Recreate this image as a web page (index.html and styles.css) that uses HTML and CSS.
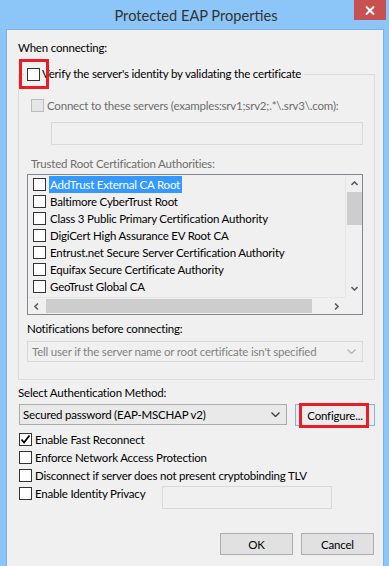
FILE: index.html
```html
<!DOCTYPE html>
<html lang="en">
<head>
  <meta charset="UTF-8">
  <title>Protected EAP Properties</title>
  <link rel="stylesheet" href="styles.css">
</head>
<body>

  <div class="window">
    <div class="titlebar">
      <span class="title">Protected EAP Properties</span>
      <span class="close">
        <svg width="10" height="9" viewBox="0 0 10 9"><path d="M1 0.5 L9 8.5 M9 0.5 L1 8.5" stroke="#fff" stroke-width="2"/></svg>
      </span>
    </div>

    <div class="panel">
      <div class="label">When connecting:</div>

      <fieldset class="group">
        <legend class="legend">
          <span class="cb"></span>
          <span>Verify the server's identity by validating the certificate</span>
          <span class="mark mark-cb"></span>
        </legend>

        <div class="check indent disabled">
          <span class="cb"></span>
          <span>Connect to these servers (examples:srv1;srv2;.*\.srv3\.com):</span>
        </div>
        <div class="field server-field"></div>

        <div class="label disabled trusted">Trusted Root Certification Authorities:</div>
        <div class="list">
          <div class="items">
            <div class="item selected"><span class="cb"></span><span class="text">AddTrust External CA Root</span></div>
            <div class="item"><span class="cb"></span><span class="text">Baltimore CyberTrust Root</span></div>
            <div class="item"><span class="cb"></span><span class="text">Class 3 Public Primary Certification Authority</span></div>
            <div class="item"><span class="cb"></span><span class="text">DigiCert High Assurance EV Root CA</span></div>
            <div class="item"><span class="cb"></span><span class="text">Entrust.net Secure Server Certification Authority</span></div>
            <div class="item"><span class="cb"></span><span class="text">Equifax Secure Certificate Authority</span></div>
            <div class="item"><span class="cb"></span><span class="text">GeoTrust Global CA</span></div>
          </div>
          <div class="vscroll">
            <span class="arrow"><svg width="7" height="5" viewBox="0 0 7 5"><path d="M0.5 4 L3.5 1 L6.5 4" fill="none" stroke="#606060" stroke-width="1.6"/></svg></span>
            <span class="vthumb"></span>
            <span class="spacer"></span>
            <span class="arrow"><svg width="7" height="5" viewBox="0 0 7 5"><path d="M0.5 1 L3.5 4 L6.5 1" fill="none" stroke="#606060" stroke-width="1.6"/></svg></span>
          </div>
          <div class="hscroll">
            <span class="arrow"><svg width="5" height="7" viewBox="0 0 5 7"><path d="M4 0.5 L1 3.5 L4 6.5" fill="none" stroke="#606060" stroke-width="1.6"/></svg></span>
            <span class="hthumb"></span>
            <span class="arrow"><svg width="5" height="7" viewBox="0 0 5 7"><path d="M1 0.5 L4 3.5 L1 6.5" fill="none" stroke="#606060" stroke-width="1.6"/></svg></span>
          </div>
          <div class="corner"></div>
        </div>

        <div class="label notify">Notifications before connecting:</div>
        <div class="combo combo-disabled">
          <span>Tell user if the server name or root certificate isn't specified</span>
          <svg width="9" height="5" viewBox="0 0 9 5"><path d="M0.5 0.5 L4.5 4.5 L8.5 0.5" fill="none" stroke="#b5b5b5" stroke-width="1.4"/></svg>
        </div>
      </fieldset>

      <div class="label method-label">Select Authentication Method:</div>
      <div class="method-row">
        <div class="combo method">
          <span>Secured password (EAP-MSCHAP v2)</span>
          <svg width="9" height="5" viewBox="0 0 9 5"><path d="M0.5 0.5 L4.5 4.5 L8.5 0.5" fill="none" stroke="#404040" stroke-width="1.4"/></svg>
        </div>
        <button class="btn btn-default">Configure...<span class="mark mark-btn"></span></button>
      </div>

      <div class="options">
        <div class="check opt">
          <span class="cb"><svg width="11" height="11" viewBox="0 0 11 11"><path d="M1.5 5.5 L4 8.5 L9.5 1.5" fill="none" stroke="#000" stroke-width="1.8"/></svg></span>
          <span>Enable Fast Reconnect</span>
        </div>
        <div class="check opt"><span class="cb"></span><span>Enforce Network Access Protection</span></div>
        <div class="check opt"><span class="cb"></span><span>Disconnect if server does not present cryptobinding TLV</span></div>
        <div class="privacy">
          <div class="check opt privacy-check"><span class="cb"></span><span>Enable Identity Privacy</span></div>
          <div class="field privacy-field"></div>
        </div>
      </div>

      <div class="actions">
        <button class="btn">OK</button>
        <button class="btn">Cancel</button>
      </div>
    </div>
  </div>

</body>
</html>
```

FILE: styles.css
```css
* {
  box-sizing: border-box;
}
body {
  margin: 0;
  background: #8cc5f7;
  font-family: Lato, "Noto Sans", Arial, sans-serif;
  font-size: 11.5px;
  letter-spacing: -0.2px;
  color: #000;
}
.window {
  height: 566px;
  display: flex;
  flex-direction: column;
  overflow: hidden;
}
.titlebar {
  height: 29px;
  position: relative;
  display: flex;
  justify-content: center;
  align-items: center;
}
.title {
  font-size: 14.6px;
  letter-spacing: 0;
  color: #333;
  margin: 1px 0 0 3px;
}
.close {
  position: absolute;
  top: 0;
  right: 3px;
  width: 32px;
  height: 20px;
  background: #c75050;
  display: flex;
  align-items: center;
  justify-content: center;
}
.panel {
  flex: 1;
  margin: 0 5px 0 6px;
  background: #f0f0f0;
  border: 1px solid #7eb0e2;
  border-bottom: none;
  padding: 10px 8px 0 11px;
}
.label {
  line-height: 16px;
  white-space: nowrap;
}
.disabled {
  color: #6d6d6d;
}

/* checkboxes */
.cb {
  width: 13px;
  height: 13px;
  flex: none;
  border: 1px solid #333;
  background: #fff;
  display: flex;
  align-items: center;
  justify-content: center;
}
.disabled .cb {
  border-color: #bcbcbc;
  background: #e6e6e6;
}
.check {
  display: flex;
  align-items: center;
  gap: 3px;
  white-space: nowrap;
}
.mark {
  position: absolute;
  border: 3px solid #e81d25;
}

/* group box */
.group {
  margin: 10px 0 0;
  border: 1px solid #dcdcdc;
  padding: 0 11px 17px 8px;
  min-width: 0;
}
.legend {
  position: relative;
  display: flex;
  align-items: center;
  gap: 2px;
  line-height: 16px;
  margin-left: -3px;
  padding: 0 3px;
  white-space: nowrap;
}
.mark-cb {
  left: -5px;
  top: -7px;
  width: 30px;
  height: 30px;
}
.indent {
  margin: 15px 0 0 4px;
  height: 16px;
}
.field {
  height: 23px;
  border: 1px solid #d9d9d9;
  background: #f0f0f0;
}
.server-field {
  margin: 9px 0 0 24px;
}
.trusted {
  margin: 11px 0 0 4px;
}

/* certificate list */
.list {
  margin-top: 2px;
  height: 141px;
  border: 1px solid #828790;
  background: #f0f0f0;
  display: grid;
  grid-template-columns: 1fr 17px;
  grid-template-rows: 1fr 17px;
}
.items {
  padding: 1px 0 0 5px;
  overflow: hidden;
}
.item {
  height: 17px;
  display: flex;
  align-items: center;
  gap: 3px;
  white-space: nowrap;
}
.item .text {
  line-height: 17px;
  padding: 0 2px 0 1px;
}
.item.selected .text {
  background: #3399ff;
  color: #fff;
}
.arrow {
  width: 17px;
  height: 17px;
  flex: none;
  display: flex;
  align-items: center;
  justify-content: center;
}
.vscroll {
  display: flex;
  flex-direction: column;
  align-items: center;
  border-left: 1px solid #e6e6e6;
}
.vthumb {
  width: 15px;
  height: 33px;
  background: #cdcdcd;
}
.spacer {
  flex: 1;
}
.hscroll {
  display: flex;
  align-items: center;
  border-top: 1px solid #e6e6e6;
}
.hthumb {
  width: 266px;
  height: 14px;
  margin-left: 1px;
  background: #cdcdcd;
}
.hscroll .arrow:last-child {
  margin-left: auto;
}
.notify {
  margin-top: 6px;
}

/* combo boxes */
.combo {
  height: 21px;
  display: flex;
  align-items: center;
  justify-content: space-between;
  white-space: nowrap;
}
.combo-disabled {
  margin-top: 4px;
  border: 1px solid #d9d9d9;
  padding: 0 6px 0 4px;
  color: #838383;
}
.method-label {
  margin-top: 5px;
}
.method-row {
  margin-top: 3px;
  display: flex;
  align-items: flex-start;
  gap: 8px;
}
.method {
  width: 268px;
  margin-left: 1px;
  border: 1px solid #acacac;
  background: #e9e9e9;
  padding: 0 6px 0 3px;
}

/* buttons */
.btn {
  position: relative;
  height: 22px;
  width: 73px;
  font-family: inherit;
  font-size: 11.5px;
  letter-spacing: -0.2px;
  color: #000;
  background: #e1e1e1;
  border: 1px solid #adadad;
  border-radius: 0;
  padding: 0;
}
.btn-default {
  width: 80px;
  border-color: #7eb4ea;
  background: #ececec;
}
.mark-btn {
  left: 3px;
  right: 5px;
  top: -2px;
  bottom: -3px;
}

/* options */
.options {
  margin-top: 4px;
}
.opt {
  height: 18px;
  margin-left: 1px;
}
.privacy {
  display: flex;
  align-items: flex-start;
}
.privacy-check {
  width: 143px;
}
.privacy-field {
  width: 170px;
  margin-top: 2px;
}
.actions {
  margin: 24px 1px 0 0;
  display: flex;
  justify-content: flex-end;
  gap: 8px;
}
```
